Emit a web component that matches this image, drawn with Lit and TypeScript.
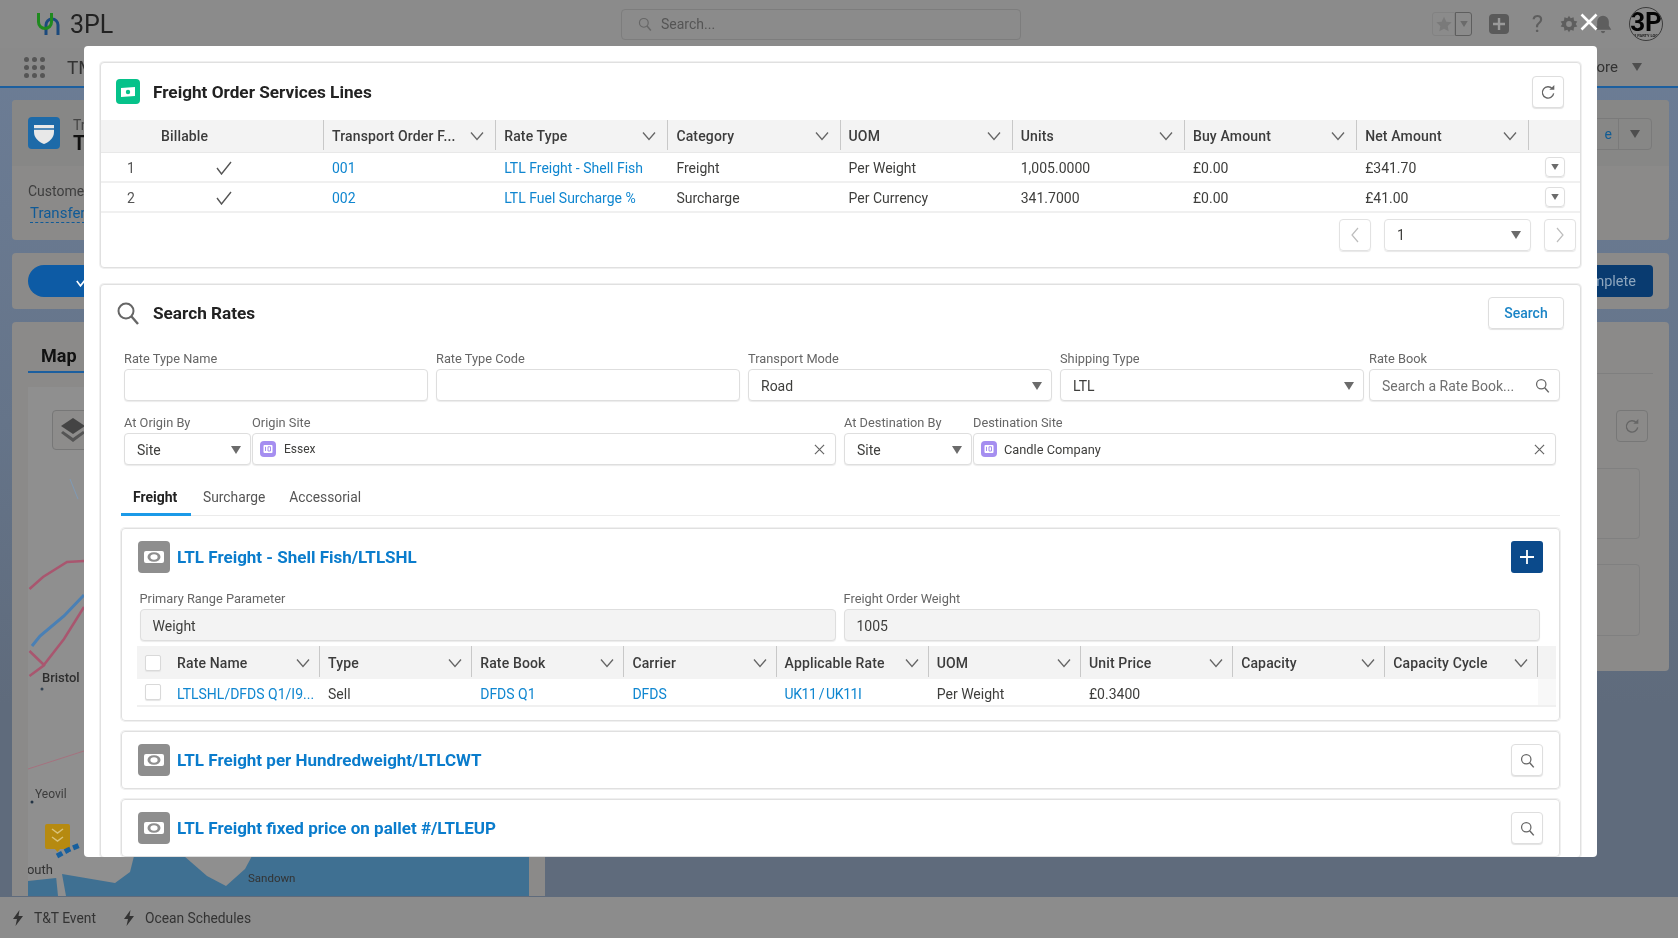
import { LitElement, html, css } from "lit";
import { customElement } from "lit/decorators.js";

const chevron = () => html`<svg class="chev" viewBox="0 0 14 10"><path d="M1 1.5 7 8.5 13 1.5" fill="none" stroke="#666" stroke-width="1.3"/></svg>`;
const caret = () => html`<svg class="caret" viewBox="0 0 10 8"><path d="M0 0H10L5 8Z" fill="#6b6b6b"/></svg>`;
const mag = (cls = "mag") => html`<svg class=${cls} viewBox="0 0 24 24"><circle cx="10" cy="10" r="7.5" fill="none" stroke="currentColor" stroke-width="2"/><path d="M15.5 15.5 22 23" fill="none" stroke="currentColor" stroke-width="2.4"/></svg>`;
const refresh = () => html`<svg class="refresh" viewBox="0 0 24 24"><path d="M18.500 7A8.500 8.500 0 1 0 20.500 14" fill="none" stroke="#666" stroke-width="2"/><path d="M14 8.500H21.500V1.500Z" fill="#666"/></svg>`;
const check = () => html`<svg class="check" viewBox="0 0 16 14"><path d="M1 7 5.5 13 15 1" fill="none" stroke="#555" stroke-width="1.4"/></svg>`;
const xmark = () => html`<svg class="xmark" viewBox="0 0 12 12"><path d="M1 1 11 11M11 1 1 11" fill="none" stroke="#666" stroke-width="1.3"/></svg>`;
const money = () => html`<span class="sec-icon"><svg viewBox="0 0 32 32"><rect x="6" y="10" width="20" height="12" rx="2" fill="#fff"/><ellipse cx="16" cy="16" rx="6.500" ry="4.800" fill="#8e8e8e"/><ellipse cx="16" cy="16" rx="3.600" ry="2.800" fill="#fff"/></svg></span>`;
const site = () => html`<span class="site"><svg viewBox="0 0 16 16"><rect x="3.5" y="4" width="9" height="8" rx="1" fill="#fff"/><path d="M5.5 5.8V10M8 5.8H10.5V10H8Z" stroke="#a58ef0" stroke-width="1" fill="none"/></svg></span>`;
const bolt = () => html`<svg class="bolt" viewBox="0 0 10 16"><path d="M6.5 0 0 9H4L2.5 16 10 6H5.5Z" fill="#333"/></svg>`;

const lines = [
  { n: "1", ord: "001", rate: "LTL Freight - Shell Fish", cat: "Freight", uom: "Per Weight", units: "1,005.0000", buy: "£0.00", net: "£341.70" },
  { n: "2", ord: "002", rate: "LTL Fuel Surcharge %", cat: "Surcharge", uom: "Per Currency", units: "341.7000", buy: "£0.00", net: "£41.00" },
];

@customElement("app-root")
export class AppRoot extends LitElement {
  static styles = css`
    :host { display: block; position: relative; width: 100%; height: 938px; overflow: hidden; font-family: Roboto, "Liberation Sans", sans-serif; font-size: 14px; color: #3e3e3c; filter: blur(0.45px); }
    * { box-sizing: border-box; }
    .page { height: 938px; display: flex; flex-direction: column; background: linear-gradient(180deg, #6d7e97 0%, #657489 45%, #5f6b7c 75%); }
    .head { height: 48px; background: #8b8b8b; display: grid; grid-template-columns: 621px 400px 1fr; align-items: center; }
    .brand { display: flex; align-items: center; padding-left: 36px; gap: 8px; font-size: 25px; color: #222; }
    .logo { width: 26px; height: 24px; }
    .gsearch { height: 31px; border: 1px solid #7d7d7d; border-radius: 4px; display: flex; align-items: center; gap: 9px; padding-left: 16px; color: #555; }
    .gsearch .mag { width: 14px; height: 14px; }
    .hright { display: flex; align-items: center; justify-content: flex-end; padding-right: 15px; }
    .fav { display: flex; width: 40px; height: 24px; margin-right: 17px; }
    .fav-a { width: 23px; border: 1px solid #828282; border-radius: 3px 0 0 3px; display: flex; align-items: center; justify-content: center; }
    .fav-a svg { width: 16px; height: 16px; }
    .fav-b { width: 17px; border: 1px solid #5e5e5e; border-radius: 0 3px 3px 0; display: flex; align-items: center; justify-content: center; }
    .fav-b .caret { width: 8px; height: 6px; }
    .plus { width: 20px; height: 20px; background: #5a5a5a; border-radius: 4px; margin-right: 21px; display: flex; align-items: center; justify-content: center; }
    .plus svg { width: 12px; height: 12px; }
    .help { width: 15px; margin-right: 14px; font-size: 24px; line-height: 24px; color: #5e5e5e; text-align: center; }
    .hic { width: 20px; height: 20px; margin-right: 14px; }
    .avatar { width: 34px; height: 34px; margin-left: 2px; border-radius: 50%; background: #8b8b8b; border: 1px solid #3c3c3c; overflow: hidden; display: flex; flex-direction: column; align-items: center; justify-content: center; font-size: 26px; line-height: 22px; font-weight: 700; color: #050505; }
    .avatar small { font-size: 4px; line-height: 5px; font-weight: 700; white-space: nowrap; color: #222; }
    .nav { height: 40px; background: #8a8a8a; border-bottom: 2px solid #1c5f9f; display: flex; align-items: center; padding: 0 36px 0 24px; }
    .dots { display: grid; grid-template-columns: repeat(3, 5px); gap: 3px; margin-right: 22px; }
    .dots i { width: 5px; height: 5px; border-radius: 50%; background: #555; }
    .tms { font-size: 19px; color: #333; flex: 1; }
    .more { font-size: 15px; color: #333; margin-right: 14px; }
    .nav .caret { width: 10px; height: 8px; }
    .nav .caret path, .btns .caret path { fill: #4e4e4e; }
    .main { flex: 1; min-height: 0; padding: 12px 9px 0 12px; display: flex; flex-direction: column; gap: 13px; }
    .panel { background: #8b8a89; border-radius: 4px; }
    .top { height: 140px; display: flex; flex-direction: column; }
    .top-h { height: 67px; background: #878786; padding: 17px 17px 0 16px; display: flex; justify-content: space-between; border-radius: 4px 4px 0 0; }
    .obj { display: flex; gap: 13px; }
    .obj-ic { width: 32px; height: 32px; background: #1d6aa8; border-radius: 4px; display: flex; align-items: center; justify-content: center; }
    .obj-ic svg { width: 22px; height: 24px; }
    .obj-t { line-height: 16px; color: #444; }
    .obj-t b { display: block; font-size: 20px; line-height: 20px; color: #111; }
    .btns { display: flex; height: 32px; width: 61px; border: 1px solid #7a7a7a; border-radius: 4px; margin-top: 1px; }
    .btns span { flex: 1; color: #115c94; line-height: 30px; font-size: 14px; text-align: right; padding-right: 6px; border-right: 1px solid #7a7a7a; overflow: hidden; }
    .btns div { width: 32px; display: flex; align-items: center; justify-content: center; }
    .btns .caret { width: 10px; height: 8px; }
    .top-b { padding: 17px 16px; }
    .top-b div { color: #3e3e3e; }
    .top-b a { display: inline-block; margin: 6px 0 0 2px; color: #0f5a97; font-size: 15px; border-bottom: 1px dashed #0f5a97; line-height: 17px; }
    .bar { height: 56px; padding: 12px 16px; display: flex; justify-content: space-between; }
    .go { width: 200px; height: 32px; border-radius: 16px; background: #0d5ba5; color: #fff; display: flex; align-items: center; padding-left: 48px; }
    .go svg { width: 13px; height: 12px; }
    .done { width: 130px; height: 32px; border-radius: 4px; background: #093b70; color: #8ea6bd; line-height: 34px; text-align: right; padding-right: 17px; font-size: 14.5px; }
    .cols { flex: 1; min-height: 0; display: flex; gap: 10px; align-items: flex-start; }
    .mapcard { width: 533px; height: 574px; background: #8b8a89; border-radius: 4px 4px 0 0; padding: 0 16px; display: flex; flex-direction: column; }
    .maptab { height: 51px; margin-bottom: 14px; border-bottom: 2px solid #1c5f9f; width: 100px; padding: 24px 0 0 13px; font-size: 18px; font-weight: 700; color: #111; line-height: 20px; }
    .map { position: relative; flex: 1; }
    .map svg { display: block; width: 501px; height: 509px; }
    .layers { position: absolute; left: 24px; top: 23px; width: 44px; height: 40px; background: #8d8c8b; border: 1px solid #777; border-radius: 4px; }
    .layers svg { width: 30px; height: 30px; margin: 4px 0 0 5px; }
    .side { flex: 1; height: 349px; background: #8b8a89; border-radius: 4px; padding: 51px 16px 0 0; display: flex; flex-direction: column; align-items: flex-end; }
    .side hr { width: 100%; margin: 0; border: 0; border-top: 1px solid #7f7f7f; }
    .side-btn { width: 32px; height: 32px; margin: 36px 5px 0 0; border: 1px solid #777; border-radius: 4px; display: flex; align-items: center; justify-content: center; }
    .box { width: calc(100% - 13px); height: 71px; margin: 26px 13px 0 0; border: 1px solid #808080; border-radius: 4px; }
    .box + .box { margin-top: 25px; height: 72px; }
    .foot { height: 41px; background: #8c8c8c; display: flex; align-items: center; padding-left: 13px; color: #333; font-size: 13.800px; }
    .foot span { display: flex; align-items: center; gap: 11px; margin-right: 28px; }
    .bolt { width: 10px; height: 16px; }

    .close { position: absolute; left: 1580px; top: 13px; width: 18px; height: 18px; }
    .modal { position: absolute; left: 84px; top: 46px; width: 1513px; height: 811px; background: #fff; border-radius: 4px; padding: 16px 16px 0; display: flex; flex-direction: column; gap: 16px; overflow: hidden; }
    .card { flex: none; border: 1px solid #e0e0e0; box-shadow: 0 0 0 1px #f0f0f0; border-radius: 4px; background: #fff; }
    .card-h { height: 57px; padding: 0 16px 0 15px; display: flex; align-items: center; gap: 13px; }
    .card-h h2, .card2-h h2 { margin: 0; flex: 1; font-size: 17.200px; font-weight: 700; color: #222; }
    .badge { width: 24px; height: 25px; border-radius: 4px; background: #06c28a; display: flex; align-items: center; justify-content: center; }
    .badge svg { width: 16px; height: 12px; }
    .btn { width: 32px; height: 32px; border: 1px solid #dedede; border-radius: 4px; background: #fff; box-shadow: 0 1px 1px #e3e3e3; display: flex; align-items: center; justify-content: center; color: #666; flex: none; }
    .refresh { width: 16px; height: 16px; }
    .grid1 { display: grid; grid-template-columns: 60px 163px repeat(7, 172.200px) 1fr; }
    .hc { background: #f3f3f3; height: 33px; display: flex; align-items: center; justify-content: space-between; padding: 0 12px 0 8px; font-weight: 500; letter-spacing: .15px; color: #3c3c3c; border-bottom: 1px solid #e8e8e8; position: relative; white-space: nowrap; }
    .hc::after { content: ""; position: absolute; right: 0; top: 0; bottom: 2px; width: 1px; background: #c8c8c8; }
    .hc.plain::after { display: none; }
    .hc.bill { padding-left: 0; }
    .chev { width: 14px; height: 10px; flex: none; }
    .cell { height: 30px; display: flex; align-items: center; padding: 2px 8px 0; border-bottom: 2px solid #f0f0f0; color: #3e3e3c; white-space: nowrap; }
    .cell.num { justify-content: center; color: #555; }
    .cell.chk { padding-left: 55px; }
    .check { width: 16px; height: 14px; }
    a { color: #0f86d0; text-decoration: none; }
    .tight { letter-spacing: -.4px; word-spacing: -1px; }
    .cell.end { justify-content: flex-end; padding: 0 15px 0 0; }
    .mini { width: 20px; height: 20px; border: 1px solid #dedede; border-radius: 4px; box-shadow: 0 1px 1px #e5e5e5; display: flex; align-items: center; justify-content: center; }
    .mini .caret { width: 8px; height: 6px; }
    .pager { display: flex; justify-content: flex-end; padding: 6px 4px 0 0; height: 54px; }
    .pbtn { width: 32px; height: 32px; border: 1px solid #e2e2e2; border-radius: 4px; box-shadow: 0 1px 1px #e8e8e8; display: flex; align-items: center; justify-content: center; }
    .pbtn svg { width: 8px; height: 16px; }
    .psel { width: 147px; height: 32px; margin: 0 13px; border: 1px solid #e2e2e2; border-radius: 4px; box-shadow: 0 1px 1px #e8e8e8; display: flex; align-items: center; justify-content: space-between; padding: 0 9px 0 12px; }
    .caret { width: 10px; height: 8px; flex: none; }

    .mag-l { width: 24px; height: 24px; color: #666; }
    .mag { width: 15px; height: 15px; color: #666; }
    .search-btn { width: 76px; height: 32px; border: 1px solid #dedede; border-radius: 4px; box-shadow: 0 1px 1px #e3e3e3; color: #1a84c6; font-weight: 500; display: flex; align-items: center; justify-content: center; }
    .card2-h { height: 56px; padding: 0 16px 0 15px; display: flex; align-items: center; gap: 13px; }
    .fields { padding: 10px 0 0 23px; display: flex; flex-direction: column; gap: 14px; }
    .frow { display: flex; gap: 8px; }
    .pair { display: flex; gap: 1px; }
    .f { display: flex; flex-direction: column; flex: none; }
    .f label { height: 16px; line-height: 16px; margin-bottom: 2px; font-size: 12.800px; color: #666; white-space: nowrap; }
    .in { height: 32px; border: 1px solid #dedede; border-radius: 4px; box-shadow: 0 1px 1px #ececec; display: flex; align-items: center; justify-content: space-between; padding: 1px 9px 0 12px; color: #3e3e3c; background: #fff; white-space: nowrap; }
    .in.ph { color: #707070; }
    .in.look { justify-content: flex-start; gap: 7px; padding: 0 10px 0 7px; font-size: 12.800px; }
    .in.look .xmark { margin-left: auto; }
    .in.ro { background: #f3f3f3; }
    .in.small { font-size: 12px; gap: 8px; }
    .xmark { width: 11px; height: 11px; }
    .site { width: 16px; height: 16px; border-radius: 4px; background: #a58ef0; flex: none; }
    .site svg { display: block; }
    .w304 { width: 304px; } .w191 { width: 191px; margin-left: -3px; }
    .w127 { width: 127px; } .w584 { width: 584px; } .w128 { width: 128px; } .w583 { width: 583px; }
    .w696 { width: 696px; }
    .tabs { margin: 16px 20px 0; height: 35px; border-bottom: 1px solid #ebebeb; display: flex; }
    .tab { padding: 8px 12px 0; color: #555; height: 35px; line-height: 17px; font-size: 13.800px; }
    .tab.on { color: #222; font-weight: 700; font-size: 14px; border-bottom: 3px solid #1b9ae8; min-width: 70px; }
    .secs { padding: 12px 20px 0; display: flex; flex-direction: column; gap: 10px; }
    .sec { border: 1px solid #e0e0e0; box-shadow: 0 0 0 1px #f0f0f0; border-radius: 4px; padding: 12px 16px 12px 16px; }
    .sec.open { padding-bottom: 13px; }
    .sec-h { display: flex; align-items: center; gap: 7px; height: 32px; }
    .sec-h a { flex: 1; font-size: 17px; font-weight: 700; color: #0a7ccc; }
    .sec-icon { width: 32px; height: 32px; background: #8e8e8e; border-radius: 4px; flex: none; }
    .sec-icon svg { display: block; }
    .add { width: 32px; height: 32px; background: #0b4a8b; border-radius: 3px; display: flex; align-items: center; justify-content: center; }
    .add svg { width: 14px; height: 14px; }
    .sec .frow { padding: 18px 0 0 1.500px; }
    .grid2 { margin: 5px 0 0 -1px; display: grid; grid-template-columns: 40px 143px repeat(8, 152.200px) 1fr; }
    .chkb { width: 16px; height: 16px; border: 1px solid #d9d9d9; border-radius: 2px; background: #fff; box-shadow: 0 1px 1px #e5e5e5; }
    .hc.first { padding: 0 0 0 8px; justify-content: flex-start; }
    .hc.first::after { display: none; }
    .hc.name { padding-left: 0; }
    .grid2 .hc { padding-right: 10px; border: 0; height: 33px; }
    .grid2 .cell { height: 28px; padding-top: 4px; }
    .grid2 .cell.first { padding-left: 8px; padding-top: 0; }
    .grid2 .cell.name { padding-left: 0; }
    .grid2 .cell.pad { background: #f8f8f8; }
  `;

  render() {
    const h1 = ["Transport Order F...", "Rate Type", "Category", "UOM", "Units", "Buy Amount", "Net Amount"];
    const h2 = ["Type", "Rate Book", "Carrier", "Applicable Rate", "UOM", "Unit Price", "Capacity", "Capacity Cycle"];
    return html`
      <div class="page">
        <header class="head">
          <div class="brand">
            <svg class="logo" viewBox="36 12 26 24"><path d="M46 35V25A5.500 5.500 0 0 1 58 25V35" fill="none" stroke="#1c4a7d" stroke-width="3"/><path d="M38.500 13V22A6.500 6.500 0 0 0 51.500 22V13" fill="none" stroke="#1f8a1f" stroke-width="3"/></svg>
            <span>3PL</span>
          </div>
          <div class="gsearch">${mag()}<span>Search...</span></div>
          <div class="hright">
            <div class="fav">
              <div class="fav-a"><svg viewBox="0 0 24 24"><path d="M12 1 15.5 8.5 23.5 9.5 17.5 15 19 23 12 19 5 23 6.5 15 .5 9.5 8.5 8.5Z" fill="#7a7a7a"/></svg></div>
              <div class="fav-b">${caret()}</div>
            </div>
            <div class="plus"><svg viewBox="0 0 12 12"><path d="M6 0V12M0 6H12" stroke="#9a9a9a" stroke-width="2.4"/></svg></div>
            <div class="help">?</div>
            <svg class="hic" viewBox="0 0 24 24"><path d="M12 2 14 5 17.5 4 18 8 22 9 20 12 22 15 18 16 17.500 20 14 19 12 22 10 19 6.500 20 6 16 2 15 4 12 2 9 6 8 6.500 4 10 5Z" fill="#5e5e5e"/><circle cx="12" cy="12" r="3.500" fill="#8b8b8b"/></svg>
            <svg class="hic" viewBox="0 0 24 24"><path d="M12 2A7 7 0 0 0 5 9V14L2 19H22L19 14V9A7 7 0 0 0 12 2ZM9.500 20.500A2.500 2.500 0 0 0 14.500 20.500Z" fill="#5e5e5e"/></svg>
            <div class="avatar">3P<small>3 PARTY LOG</small></div>
          </div>
        </header>
        <nav class="nav">
          <div class="dots">${[...Array(9)].map(() => html`<i></i>`)}</div>
          <span class="tms">TM</span>
          <span class="more">More</span>
          ${caret()}
        </nav>
        <main class="main">
          <section class="panel top">
            <div class="top-h">
              <div class="obj">
                <span class="obj-ic"><svg viewBox="0 0 22 24"><path d="M1 4H21V11C21 17 16 21 11 23 6 21 1 17 1 11Z" fill="#e8e8e8"/><path d="M1 8H21" stroke="#1d6aa8" stroke-width="1.5"/></svg></span>
                <div class="obj-t">Tr<b>T</b></div>
              </div>
              <div class="btns"><span>e</span><div>${caret()}</div></div>
            </div>
            <div class="top-b"><div>Customer</div><a>Transfer</a></div>
          </section>
          <section class="panel bar">
            <div class="go"><svg viewBox="0 0 16 14"><path d="M1 7 5.500 13 15 1" fill="none" stroke="#fff" stroke-width="2"/></svg></div>
            <div class="done">Complete</div>
          </section>
          <div class="cols">
            <section class="mapcard">
              <div class="maptab">Map</div>
              <div class="map">
                <svg viewBox="28 388 501 509">
                  <rect x="28" y="388" width="501" height="509" fill="#8f8f8f"/>
                  <rect x="28" y="857" width="501" height="40" fill="#3f7092"/>
                  <path d="M28 857H134L130 873 115 884 62 875 56 879 28 882ZM56 877 62 875 66 897H58Z" fill="#8f8f8f"/>
                  <path d="M184 857H252L245 870 226 887 207 877Z" fill="#8f8f8f"/>
                  <path d="M29.500 590 43 578 67 563 84 562" fill="none" stroke="#a9566f" stroke-width="2.500"/>
                  <path d="M84 608 64 640 43 667 29.500 677M29.500 652 45 667" fill="none" stroke="#a9566f" stroke-width="2.500"/>
                  <path d="M28 770 84 752" fill="none" stroke="#a5727f" stroke-width="1"/>
                  <path d="M32 647 40 637 64 617 84 596" fill="none" stroke="#4a80b5" stroke-width="3"/>
                  <path d="M70 480 78 500" fill="none" stroke="#7f9ab5" stroke-width="1"/>
                  <circle cx="42" cy="690" r="1.500" fill="#345"/><circle cx="32" cy="803" r="1.500" fill="#234"/>
                  <text x="42" y="683" font-size="13" font-weight="500" fill="#2e2e2e">Bristol</text>
                  <text x="35" y="799" font-size="12" fill="#3c3c3c">Yeovil</text>
                  <text x="-2" y="875" font-size="13" fill="#333">Plymouth</text>
                  <text x="248" y="883" font-size="11.500" fill="#333">Sandown</text>
                  <path d="M45 827A2 2 0 0 1 47 825H68A2 2 0 0 1 70 827V848A2 2 0 0 1 68 850H60L57.500 853 55 850H47A2 2 0 0 1 45 848Z" fill="#b68a10"/>
                  <path d="M52 830 57.500 834 63 830M52 838 57.500 842 63 838" fill="none" stroke="#d9c27a" stroke-width="1.500"/>
                  <path d="M57 857 68 851 80 846" fill="none" stroke="#175f9e" stroke-width="5" stroke-dasharray="6 3"/>
                </svg>
                <div class="layers"><svg viewBox="0 0 30 30"><path d="M15 3 27 11 15 19 3 11Z" fill="#444"/><path d="M5 16 15 23 25 16 27 18 15 27 3 18Z" fill="#555"/></svg></div>
              </div>
            </section>
            <section class="side">
              <hr/>
              <div class="side-btn">${refresh()}</div>
              <div class="box"></div>
              <div class="box"></div>
            </section>
          </div>
        </main>
        <footer class="foot">
          <span>${bolt()}T&amp;T Event</span>
          <span>${bolt()}Ocean Schedules</span>
        </footer>
      </div>

      <svg class="close" viewBox="0 0 18 18"><path d="M1.500 1.500 16.500 16.500M16.500 1.500 1.500 16.500" stroke="#fff" stroke-width="2.600" fill="none"/></svg>

      <div class="modal">
        <section class="card">
          <div class="card-h">
            <span class="badge"><svg viewBox="0 0 16 12"><path d="M1 2 15 1V10L1 11Z" fill="#fff"/><circle cx="8" cy="6" r="2.200" fill="#06c28a"/></svg></span>
            <h2>Freight Order Services Lines</h2>
            <div class="btn">${refresh()}</div>
          </div>
          <div class="grid1">
            <div class="hc plain"></div>
            <div class="hc bill">Billable</div>
            ${h1.map((t) => html`<div class="hc"><span>${t}</span>${chevron()}</div>`)}
            <div class="hc plain"></div>
            ${lines.map((r) => html`
              <div class="cell num">${r.n}</div>
              <div class="cell chk">${check()}</div>
              <div class="cell"><a>${r.ord}</a></div>
              <div class="cell"><a>${r.rate}</a></div>
              <div class="cell">${r.cat}</div>
              <div class="cell">${r.uom}</div>
              <div class="cell">${r.units}</div>
              <div class="cell">${r.buy}</div>
              <div class="cell">${r.net}</div>
              <div class="cell end"><div class="mini">${caret()}</div></div>
            `)}
          </div>
          <div class="pager">
            <div class="pbtn"><svg viewBox="0 0 8 16"><path d="M7 1 1 8 7 15" fill="none" stroke="#bdbdbd" stroke-width="1.200"/></svg></div>
            <div class="psel"><span>1</span>${caret()}</div>
            <div class="pbtn"><svg viewBox="0 0 8 16"><path d="M1 1 7 8 1 15" fill="none" stroke="#bdbdbd" stroke-width="1.200"/></svg></div>
          </div>
        </section>

        <section class="card">
          <div class="card2-h">
            ${mag("mag-l")}
            <h2>Search Rates</h2>
            <div class="search-btn">Search</div>
          </div>
          <div class="fields">
            <div class="frow">
              <div class="f w304"><label>Rate Type Name</label><div class="in"></div></div>
              <div class="f w304"><label>Rate Type Code</label><div class="in"></div></div>
              <div class="f w304"><label>Transport Mode</label><div class="in">Road${caret()}</div></div>
              <div class="f w304"><label>Shipping Type</label><div class="in">LTL${caret()}</div></div>
              <div class="f w191"><label>Rate Book</label><div class="in ph">Search a Rate Book...${mag()}</div></div>
            </div>
            <div class="frow">
              <div class="pair">
                <div class="f w127"><label>At Origin By</label><div class="in">Site${caret()}</div></div>
                <div class="f w584"><label>Origin Site</label><div class="in look small">${site()}<span>Essex</span>${xmark()}</div></div>
              </div>
              <div class="pair">
                <div class="f w128"><label>At Destination By</label><div class="in">Site${caret()}</div></div>
                <div class="f w583"><label>Destination Site</label><div class="in look">${site()}<span>Candle Company</span>${xmark()}</div></div>
              </div>
            </div>
          </div>
          <div class="tabs">
            <div class="tab on">Freight</div>
            <div class="tab">Surcharge</div>
            <div class="tab">Accessorial</div>
          </div>
          <div class="secs">
            <div class="sec open">
              <div class="sec-h">${money()}<a>LTL Freight - Shell Fish/LTLSHL</a>
                <div class="add"><svg viewBox="0 0 14 14"><path d="M7 0V14M0 7H14" stroke="#fff" stroke-width="1.800"/></svg></div>
              </div>
              <div class="frow">
                <div class="f w696"><label>Primary Range Parameter</label><div class="in ro">Weight</div></div>
                <div class="f w696"><label>Freight Order Weight</label><div class="in ro">1005</div></div>
              </div>
              <div class="grid2">
                <div class="hc first"><div class="chkb"></div></div>
                <div class="hc name"><span>Rate Name</span>${chevron()}</div>
                ${h2.map((t) => html`<div class="hc"><span>${t}</span>${chevron()}</div>`)}
                <div class="hc plain"></div>
                <div class="cell first"><div class="chkb"></div></div>
                <div class="cell name"><a>LTLSHL/DFDS Q1/I9...</a></div>
                <div class="cell">Sell</div>
                <div class="cell"><a>DFDS Q1</a></div>
                <div class="cell"><a>DFDS</a></div>
                <div class="cell"><a class="tight">UK11 / UK11I</a></div>
                <div class="cell">Per Weight</div>
                <div class="cell">£0.3400</div>
                <div class="cell"></div>
                <div class="cell"></div>
                <div class="cell pad"></div>
              </div>
            </div>
            <div class="sec">
              <div class="sec-h">${money()}<a>LTL Freight per Hundredweight/LTLCWT</a><div class="btn">${mag()}</div></div>
            </div>
            <div class="sec">
              <div class="sec-h">${money()}<a>LTL Freight fixed price on pallet #/LTLEUP</a><div class="btn">${mag()}</div></div>
            </div>
          </div>
        </section>
      </div>
    `;
  }
}
